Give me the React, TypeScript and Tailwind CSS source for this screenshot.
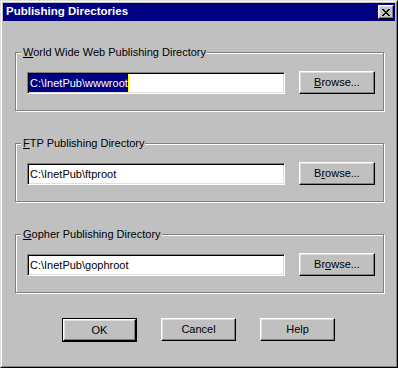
const raised =
	'border border-t-white border-l-white border-r-black border-b-black shadow-[inset_-1px_-1px_0_#808080,inset_1px_1px_0_#dfdfdf] bg-[#c0c0c0]'

function CloseGlyph() {
	const rows: [number, number][][] = [
		[[0, 2], [6, 2]],
		[[1, 2], [5, 2]],
		[[2, 4]],
		[[3, 2]],
		[[2, 4]],
		[[1, 2], [5, 2]],
		[[0, 2], [6, 2]],
	]
	return (
		<svg width="8" height="7" viewBox="0 0 8 7" shapeRendering="crispEdges">
			{rows.map((segs, y) =>
				segs.map(([x, w]) => <rect key={`${y}-${x}`} x={x} y={y} width={w} height={1} fill="#000" />),
			)}
		</svg>
	)
}

function Button({ children, wide = false }: { children: React.ReactNode; wide?: boolean }) {
	return (
		<button
			type="button"
			className={`${raised} ${wide ? 'w-[76px]' : 'w-[75px]'} h-[23px] flex items-center justify-center text-[11px] leading-none text-black`}
		>
			{children}
		</button>
	)
}

type GroupProps = {
	label: React.ReactNode
	value: string
	browse: React.ReactNode
	selected?: boolean
}

function Group({ label, value, browse, selected = false }: GroupProps) {
	return (
		<div className="w-[369px] h-[59px] border border-[#808080] shadow-[inset_1px_1px_0_#fff,1px_1px_0_#fff]">
			<div className="-mt-[7px] ml-[5px] w-fit bg-[#c0c0c0] pl-[2px] pr-[1px] text-[11px] leading-[13px] text-black">
				{label}
			</div>
			<div className="flex items-start ml-[11px] mt-[12px] gap-[14px]">
				<div className="mt-px w-[258px] h-[22px] border border-t-[#808080] border-l-[#808080] border-r-white border-b-white shadow-[inset_1px_1px_0_#000,inset_-1px_-1px_0_#dfdfdf] bg-white p-px flex items-center">
					{selected ? (
						<div className="flex h-[18px] items-center">
							<span className="h-full bg-[#000080] text-white pl-px text-[11px] leading-[18px]">{value}</span>
							<span className="h-full w-px bg-[#ffff00]" />
						</div>
					) : (
						<span className="pl-px text-[11px] leading-[18px] text-black">{value}</span>
					)}
				</div>
				<Button wide>{browse}</Button>
			</div>
		</div>
	)
}

export default function App() {
	return (
		<div className="w-[398px] h-[368px] border border-t-[#dfdfdf] border-l-[#dfdfdf] border-r-black border-b-black bg-[#c0c0c0] font-['Liberation_Sans',Arial,sans-serif] select-none">
			<div className="h-full border border-t-white border-l-white border-r-[#808080] border-b-[#808080] p-px flex flex-col">
				<div className="h-[18px] bg-[#000080] flex items-center justify-between pl-[3px] pr-[1px]">
					<span className="text-white font-bold text-[11.5px] leading-none">Publishing Directories</span>
					<div className={`${raised} w-[16px] h-[14px] flex items-center justify-center`}>
						<CloseGlyph />
					</div>
				</div>

				<div className="flex flex-col ml-[12px] mt-[31px] gap-[32px]">
					<Group
						label={
							<>
								<span className="underline">W</span>orld Wide Web Publishing Directory
							</>
						}
						value="C:\InetPub\wwwroot"
						selected
						browse={
							<>
								<span className="underline">B</span>rowse...
							</>
						}
					/>
					<Group
						label={
							<>
								<span className="underline">F</span>TP Publishing Directory
							</>
						}
						value="C:\InetPub\ftproot"
						browse={
							<>
								B<span className="underline">r</span>owse...
							</>
						}
					/>
					<Group
						label={
							<>
								<span className="underline">G</span>opher Publishing Directory
							</>
						}
						value="C:\InetPub\gophroot"
						browse={
							<>
								Br<span className="underline">o</span>wse...
							</>
						}
					/>
				</div>

				<div className="flex justify-center gap-[24px] mt-[25px] pr-px">
					<div className="border border-black w-[75px] h-[24px]">
						<button
							type="button"
							className={`${raised} w-full h-full flex items-center justify-center text-[11px] leading-none text-black`}
						>
							OK
						</button>
					</div>
					<Button>Cancel</Button>
					<Button>Help</Button>
				</div>
			</div>
		</div>
	)
}
